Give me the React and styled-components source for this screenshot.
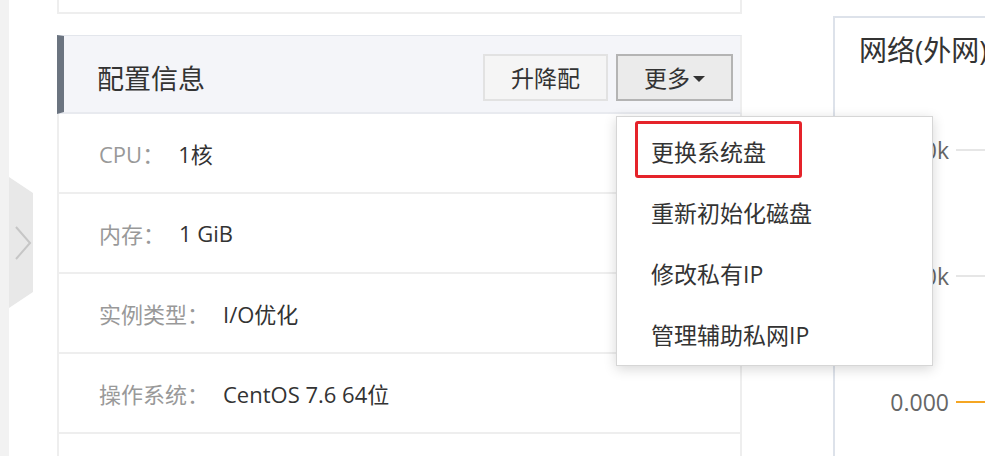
import styled, { createGlobalStyle } from "styled-components";

const GlobalStyle = createGlobalStyle`
  html, body {
    margin: 0;
    padding: 0;
    background: #ffffff;
    overflow: hidden;
  }
  body {
    font-family: "Open Sans", "Noto Sans CJK SC", sans-serif;
    color: #333;
  }
  * { box-sizing: border-box; }
`;

const Page = styled.div`
  display: flex;
  align-items: flex-start;
  width: 985px;
  height: 456px;
  overflow: hidden;
`;

const Rail = styled.div`
  width: 9px;
  height: 100%;
  flex-shrink: 0;
  background: #f2f2f2;
`;

const Gutter = styled.div`
  width: 48px;
  flex-shrink: 0;
  padding-top: 177px;
`;

const Handle = styled.div`
  width: 24px;
  height: 131px;
  background: #e8e8e8;
  clip-path: polygon(0 0, 100% 16px, 100% 115px, 0 100%);
  display: flex;
  align-items: center;
  justify-content: center;
  padding-left: 3px;
`;

const Main = styled.div`
  width: 685px;
  flex-shrink: 0;
  display: flex;
  flex-direction: column;
  gap: 21px;

  & > * {
    flex-shrink: 0;
  }
`;

const TopCard = styled.div`
  height: 14px;
  border: 2px solid #eeeeee;
  border-top: none;
`;

const Card = styled.section`
  border-left: 2px solid #eeeeee;
  border-right: 2px solid #eeeeee;
`;

const CardHeader = styled.header`
  height: 79px;
  margin-left: -2px;
  margin-right: -2px;
  background: #f4f5f9;
  border-top: 1px solid #e3e6ec;
  border-bottom: 2px solid #e8eaef;
  border-left: 7px solid #6b7480;
  border-right: 2px solid #eeeeee;
  display: flex;
  align-items: center;
  justify-content: space-between;
  padding: 6px 7px 0 33px;
`;

const Title = styled.h2`
  margin: 0;
  font-size: 27px;
  font-weight: 400;
  color: #333;
`;

const Actions = styled.div`
  display: flex;
  gap: 8px;
`;

const Dropdown = styled.div`
  position: relative;
`;

const Button = styled.button`
  height: 47px;
  padding: 0 26px;
  font-family: inherit;
  font-size: 23px;
  color: #333;
  background: ${(p) => (p.$active ? "#ebebeb" : "#f5f5f5")};
  border: 2px solid ${(p) => (p.$active ? "#b4b4b4" : "#e2e2e2")};
  display: flex;
  align-items: center;
  cursor: pointer;
`;

const Caret = styled.span`
  width: 0;
  height: 0;
  margin-left: 3px;
  margin-top: 3px;
  border-left: 6px solid transparent;
  border-right: 6px solid transparent;
  border-top: 6px solid #333;
`;

const Menu = styled.ul`
  position: absolute;
  top: calc(100% + 15px);
  left: 0;
  z-index: 10;
  width: 317px;
  margin: 0;
  padding: 4px 0 0;
  list-style: none;
  background: #ffffff;
  border: 1px solid #d6d6d6;
  box-shadow: 0 3px 12px rgba(0, 0, 0, 0.16);
`;

const MenuItem = styled.li`
  position: relative;
  height: 61px;
  padding-left: 34px;
  display: flex;
  align-items: center;
  font-size: 23px;
  color: #333;
  white-space: nowrap;
`;

const Mark = styled.span`
  position: absolute;
  left: 18px;
  top: 0;
  width: 167px;
  height: 57px;
  border: 3px solid #e5232a;
  border-radius: 3px;
`;

const Row = styled.div`
  height: 80px;
  border-bottom: 2px solid #eeeeee;
  display: flex;
  align-items: center;
  padding-left: 40px;
  font-size: 22px;
`;

const Label = styled.span`
  color: #999;
  margin-right: 14px;
`;

const Value = styled.span`
  color: #333;
`;

const Side = styled.div`
  width: 420px;
  flex-shrink: 0;
  margin-left: 91px;
  padding-top: 16px;
`;

const ChartCard = styled.section`
  height: 520px;
  border: 2px solid #dde2ea;
  padding: 14px 0 0 24px;
`;

const ChartTitle = styled.h3`
  margin: 0;
  font-size: 28px;
  line-height: 36px;
  font-weight: 400;
  color: #333;
  white-space: nowrap;
`;

const Axis = styled.div`
  margin-top: 19px;
  margin-left: -24px;
  display: flex;
  flex-direction: column;
`;

const Tick = styled.div`
  height: 126px;
  display: flex;
  align-items: center;
  gap: 7px;
`;

const TickLabel = styled.span`
  width: 114px;
  text-align: right;
  font-size: 23px;
  color: #666;
`;

const TickLine = styled.span`
  flex: 1;
  height: 2px;
  background: ${(p) => (p.$base ? "#f5a623" : "#e6e6e6")};
`;

const specs = [
  { label: "CPU：", value: "1核" },
  { label: "内存：", value: "1 GiB" },
  { label: "实例类型：", value: "I/O优化" },
  { label: "操作系统：", value: "CentOS 7.6 64位" },
];

const menuItems = ["更换系统盘", "重新初始化磁盘", "修改私有IP", "管理辅助私网IP"];

const ticks = [
  { label: "2.0k" },
  { label: "1.0k" },
  { label: "0.000", base: true },
];

function Chevron() {
  return (
    <svg width="18" height="34" viewBox="0 0 18 34" fill="none">
      <path d="M2 1 L16 17 L2 33" stroke="#c6c6c6" strokeWidth="2" />
    </svg>
  );
}

export default function App() {
  return (
    <>
      <GlobalStyle />
      <Page>
        <Rail />
        <Gutter>
          <Handle>
            <Chevron />
          </Handle>
        </Gutter>
        <Main>
          <TopCard />
          <Card>
            <CardHeader>
              <Title>配置信息</Title>
              <Actions>
                <Button>升降配</Button>
                <Dropdown>
                  <Button $active>
                    更多<Caret />
                  </Button>
                  <Menu>
                    {menuItems.map((item, i) => (
                      <MenuItem key={item}>
                        {i === 0 && <Mark />}
                        {item}
                      </MenuItem>
                    ))}
                  </Menu>
                </Dropdown>
              </Actions>
            </CardHeader>
            {specs.map((s) => (
              <Row key={s.label}>
                <Label>{s.label}</Label>
                <Value>{s.value}</Value>
              </Row>
            ))}
            <Row />
          </Card>
        </Main>
        <Side>
          <ChartCard>
            <ChartTitle>网络(外网)</ChartTitle>
            <Axis>
              {ticks.map((t) => (
                <Tick key={t.label}>
                  <TickLabel>{t.label}</TickLabel>
                  <TickLine $base={t.base} />
                </Tick>
              ))}
            </Axis>
          </ChartCard>
        </Side>
      </Page>
    </>
  );
}
